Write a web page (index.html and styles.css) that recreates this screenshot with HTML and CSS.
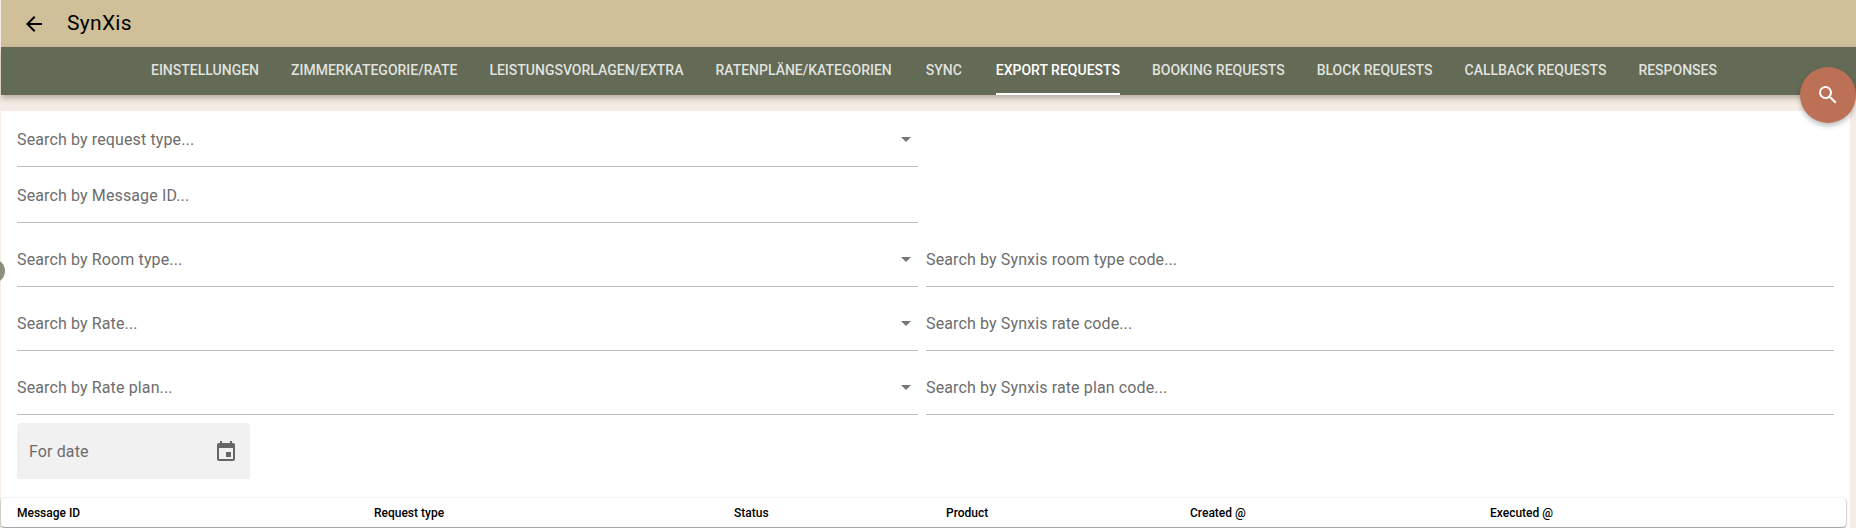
FILE: index.html
```html
<!DOCTYPE html>
<html lang="de">
<head>
<meta charset="utf-8">
<title>SynXis</title>
<link rel="stylesheet" href="styles.css">
</head>
<body>
<div class="app">
  <header class="toolbar">
    <svg class="back" viewBox="0 0 24 24" width="24" height="24"><path d="M20 11H7.83l5.59-5.59L12 4l-8 8 8 8 1.41-1.41L7.83 13H20v-2z"/></svg>
    <span class="title">SynXis</span>
  </header>
  <nav class="tabs">
    <a class="tab"><span>EINSTELLUNGEN</span></a>
    <a class="tab"><span>ZIMMERKATEGORIE/RATE</span></a>
    <a class="tab"><span>LEISTUNGSVORLAGEN/EXTRA</span></a>
    <a class="tab"><span>RATENPLÄNE/KATEGORIEN</span></a>
    <a class="tab"><span>SYNC</span></a>
    <a class="tab active"><span>EXPORT REQUESTS</span></a>
    <a class="tab"><span>BOOKING REQUESTS</span></a>
    <a class="tab"><span>BLOCK REQUESTS</span></a>
    <a class="tab"><span>CALLBACK REQUESTS</span></a>
    <a class="tab"><span>RESPONSES</span></a>
  </nav>
  <main class="card">
    <div class="col-left">
      <div class="field"><span>Search by request type...</span><i class="caret"></i></div>
      <div class="field"><span>Search by Message ID...</span></div>
    </div>
    <div class="form-grid">
      <div class="field"><span>Search by Room type...</span><i class="caret"></i></div>
      <div class="field"><span>Search by Synxis room type code...</span></div>
      <div class="field"><span>Search by Rate...</span><i class="caret"></i></div>
      <div class="field"><span>Search by Synxis rate code...</span></div>
      <div class="field"><span>Search by Rate plan...</span><i class="caret"></i></div>
      <div class="field"><span>Search by Synxis rate plan code...</span></div>
    </div>
    <div class="date">
      <span>For date</span>
      <svg viewBox="0 0 24 24" width="24" height="24"><path d="M19 4h-1V2h-2v2H8V2H6v2H5c-1.1 0-2 .9-2 2v14c0 1.1.9 2 2 2h14c1.1 0 2-.9 2-2V6c0-1.1-.9-2-2-2zm0 16H5V9h14v11zm-2-7h-5v5h5v-5z"/></svg>
    </div>
    <div class="thead">
      <span>Message ID</span>
      <span>Request type</span>
      <span>Status</span>
      <span>Product</span>
      <span>Created @</span>
      <span>Executed @</span>
    </div>
  </main>
  <button class="fab">
    <svg viewBox="0 0 24 24" width="24" height="24"><path d="M15.5 14h-.79l-.28-.27A6.47 6.47 0 0 0 16 9.5 6.5 6.5 0 1 0 9.5 16c1.61 0 3.09-.59 4.23-1.57l.27.28v.79l5 4.99L20.49 19l-4.99-5zm-6 0C7.01 14 5 11.99 5 9.5S7.01 5 9.5 5 14 7.01 14 9.5 11.99 14 9.5 14z"/></svg>
  </button>
  <div class="handle"></div>
</div>
</body>
</html>
```
FILE: styles.css
```css
* { box-sizing: border-box; }
html, body { margin: 0; height: 100%; overflow: hidden; }
body { background: #f5ede5; font-family: Roboto, "Liberation Sans", sans-serif; }
.app { position: relative; height: 528px; padding-left: 1px; overflow: hidden; }
.toolbar { height: 47px; background: #d0c09a; display: flex; align-items: center; padding-left: 21px; color: #000; }
.back { display: block; margin-right: 21px; }
.title { font-size: 21px; font-weight: 400; letter-spacing: 0.3px; margin-bottom: 2px; }
.tabs { height: 48px; background: #636a55; display: flex; padding-left: 134px; box-shadow: 0 3px 6px rgba(60, 45, 35, 0.35); position: relative; z-index: 1; }
.tab { display: flex; justify-content: center; min-width: 72px; height: 48px; padding: 0 16px; font-size: 14px; font-weight: 500; color: rgba(255, 255, 255, 0.82); white-space: nowrap; }
.tab span { display: flex; align-items: center; height: 48px; border-bottom: 2px solid transparent; }
.tab.active { color: #fff; }
.tab.active span { border-bottom-color: #fff; }
.card { margin-top: 16px; width: 1849px; height: 417px; background: #fff; display: flex; flex-direction: column; }
.col-left { width: 917px; padding-left: 16px; }
.field { height: 56px; display: flex; align-items: center; justify-content: space-between; border-bottom: 1px solid #bdbdbd; font-size: 16px; letter-spacing: 0.125px; color: #6d6d6d; padding-top: 1px; }
.caret { width: 0; height: 0; border-left: 5px solid transparent; border-right: 5px solid transparent; border-top: 5px solid #757575; margin-right: 7px; }
.form-grid { display: grid; grid-template-columns: 901px 908px; column-gap: 8px; padding: 8px 0 0 16px; row-gap: 8px; }
.date { margin: 8px 0 0 16px; width: 233px; height: 56px; background: #f1f1f1; border-radius: 4px 4px 0 0; display: flex; align-items: center; justify-content: space-between; padding: 0 12px; font-size: 16px; letter-spacing: 0.125px; color: #6d6d6d; }
.date svg { fill: #666; display: block; }
.thead { margin-top: 19px; width: 1845px; height: 29px; background: #fff; border-radius: 4px; box-shadow: 0 1px 2px rgba(0, 0, 0, 0.45), 0 0 3px rgba(0, 0, 0, 0.08); display: grid; grid-template-columns: 357px 360px 212px 244px 300px 1fr; padding-left: 16px; align-items: center; font-size: 12px; font-weight: 500; color: #000; }
.fab { position: absolute; left: 1800px; top: 67px; width: 56px; height: 56px; border: 0; border-radius: 50%; background: #bc7055; box-shadow: 0 3px 5px rgba(0, 0, 0, 0.25); display: flex; align-items: center; justify-content: center; z-index: 2; padding: 0; }
.fab svg { fill: #fff; display: block; }
.handle { position: absolute; left: -19px; top: 259px; width: 24px; height: 24px; border-radius: 50%; background: #8a8f7e; }
```
